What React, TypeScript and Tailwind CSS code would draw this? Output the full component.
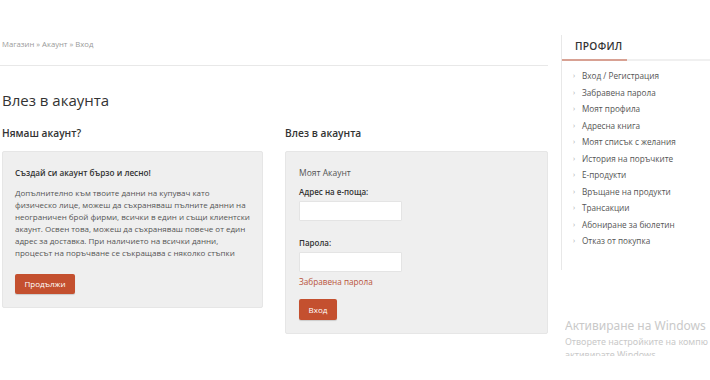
import React from "react";

// Профил меню
const profileLinks = [
  "Вход / Регистрация",
  "Забравена парола",
  "Моят профила",
  "Адресна книга",
  "Моят списък с желания",
  "История на поръчките",
  "Е-продукти",
  "Връщане на продукти",
  "Трансакции",
  "Абониране за бюлетин",
  "Отказ от покупка",
];

const App: React.FC = () => {
  return (
    <div className="relative w-[710px] h-[380px] overflow-hidden bg-white font-['Open_Sans','Noto_Sans',sans-serif] text-[#444]">
      <div className="flex items-start">
        <main className="w-[548px] shrink-0">
          <div className="pl-[2px] pt-[38px] pb-[15px] text-[7.7px] leading-[12px] text-[#9a9a9a]">
            Магазин » Акаунт » Вход
          </div>
          <hr className="border-[#e8e8e8]" />
          <h1 className="pl-[2px] mt-[23px] text-[15px] leading-[22px] text-[#333]">
            Влез в акаунта
          </h1>

          <div className="flex gap-[22px] mt-[14px] pl-[2px]">
            {/* нямаш акаунт */}
            <section className="w-[261px]">
              <h2 className="text-[10.2px] leading-[16px] font-semibold text-[#333]">
                Нямаш акаунт?
              </h2>
              <div className="mt-[10px] bg-[#efefef] border border-[#e6e6e6] rounded-[2px] px-[12px] pt-[15px] pb-[13px]">
                <p className="text-[8.2px] leading-[12px] font-semibold text-[#333]">
                  Създай си акаунт бързо и лесно!
                </p>
                <p className="mt-[8px] text-[8px] leading-[12px] text-[#555] whitespace-nowrap">
                  Допълнително към твоите данни на купувач като
                  <br />
                  физическо лице, можеш да съхраняваш пълните данни на
                  <br />
                  неограничен брой фирми, всички в един и същи клиентски
                  <br />
                  акаунт. Освен това, можеш да съхраняваш повече от един
                  <br />
                  адрес за доставка. При наличието на всички данни,
                  <br />
                  процесът на поръчване се съкращава с няколко стъпки
                </p>
                <button className="mt-[15px] h-[20px] w-[60px] rounded-[2px] bg-[#c4502f] text-white text-[8px] font-medium shadow-[0_1px_1px_rgba(0,0,0,0.15)]">
                  Продължи
                </button>
              </div>
            </section>

            {/* вход */}
            <section className="w-[263px]">
              <h2 className="text-[10.2px] leading-[16px] font-semibold text-[#333]">
                Влез в акаунта
              </h2>
              <div className="mt-[10px] bg-[#efefef] border border-[#e6e6e6] rounded-[2px] px-[13px] pt-[15px] pb-[13px]">
                <p className="text-[8.5px] leading-[12px] text-[#555]">Моят Акаунт</p>
                <label className="block mt-[7px] text-[8px] leading-[12px] font-semibold text-[#333]">
                  Адрес на е-поща:
                </label>
                <input className="block mt-[3px] w-[103px] h-[20px] bg-white border border-[#e4e4e4] rounded-[1px]" />
                <label className="block mt-[16px] text-[8px] leading-[12px] font-semibold text-[#333]">
                  Парола:
                </label>
                <input
                  type="password"
                  className="block mt-[3px] w-[103px] h-[20px] bg-white border border-[#e4e4e4] rounded-[1px]"
                />
                <a className="block mt-[4px] text-[8.2px] leading-[12px] text-[#b9533b]">
                  Забравена парола
                </a>
                <button className="mt-[11px] h-[21px] w-[38px] rounded-[2px] bg-[#c4502f] text-white text-[8px] font-medium shadow-[0_1px_1px_rgba(0,0,0,0.15)]">
                  Вход
                </button>
              </div>
            </section>
          </div>
        </main>

        <aside className="ml-[13px] mt-[35px] w-[149px] border-l border-[#e8e8e8] pb-[20px]">
          <div className="pl-[13px] pt-[3px] pb-[5px] text-[10.2px] leading-[16px] font-semibold tracking-[0.3px] text-[#333]">
            ПРОФИЛ
          </div>
          <div className="flex h-[2px]">
            <div className="w-[65px] bg-[#d8a193]" />
            <div className="flex-1 bg-[#f0f0f0]" />
          </div>
          <ul className="mt-[7px]">
            {profileLinks.map((link) => (
              <li
                key={link}
                className="flex items-center h-[16.5px] pl-[11px] text-[8.2px] text-[#555]"
              >
                <span className="w-[9px] text-[7px] text-[#aaa]">›</span>
                <span>{link}</span>
              </li>
            ))}
          </ul>
        </aside>
      </div>

      {/* Windows watermark */}
      <div className="absolute left-[565px] top-[317px] w-[145px] h-[39px] overflow-hidden whitespace-nowrap font-['Noto_Sans',sans-serif] text-[#c9c9c9]">
        <div className="text-[12px] leading-[18px]">Активиране на Windows</div>
        <div className="text-[9px] leading-[13px]">Отворете настройките на компю</div>
        <div className="text-[9px] leading-[13px]">активирате Windows.</div>
      </div>
    </div>
  );
};

export default App;
